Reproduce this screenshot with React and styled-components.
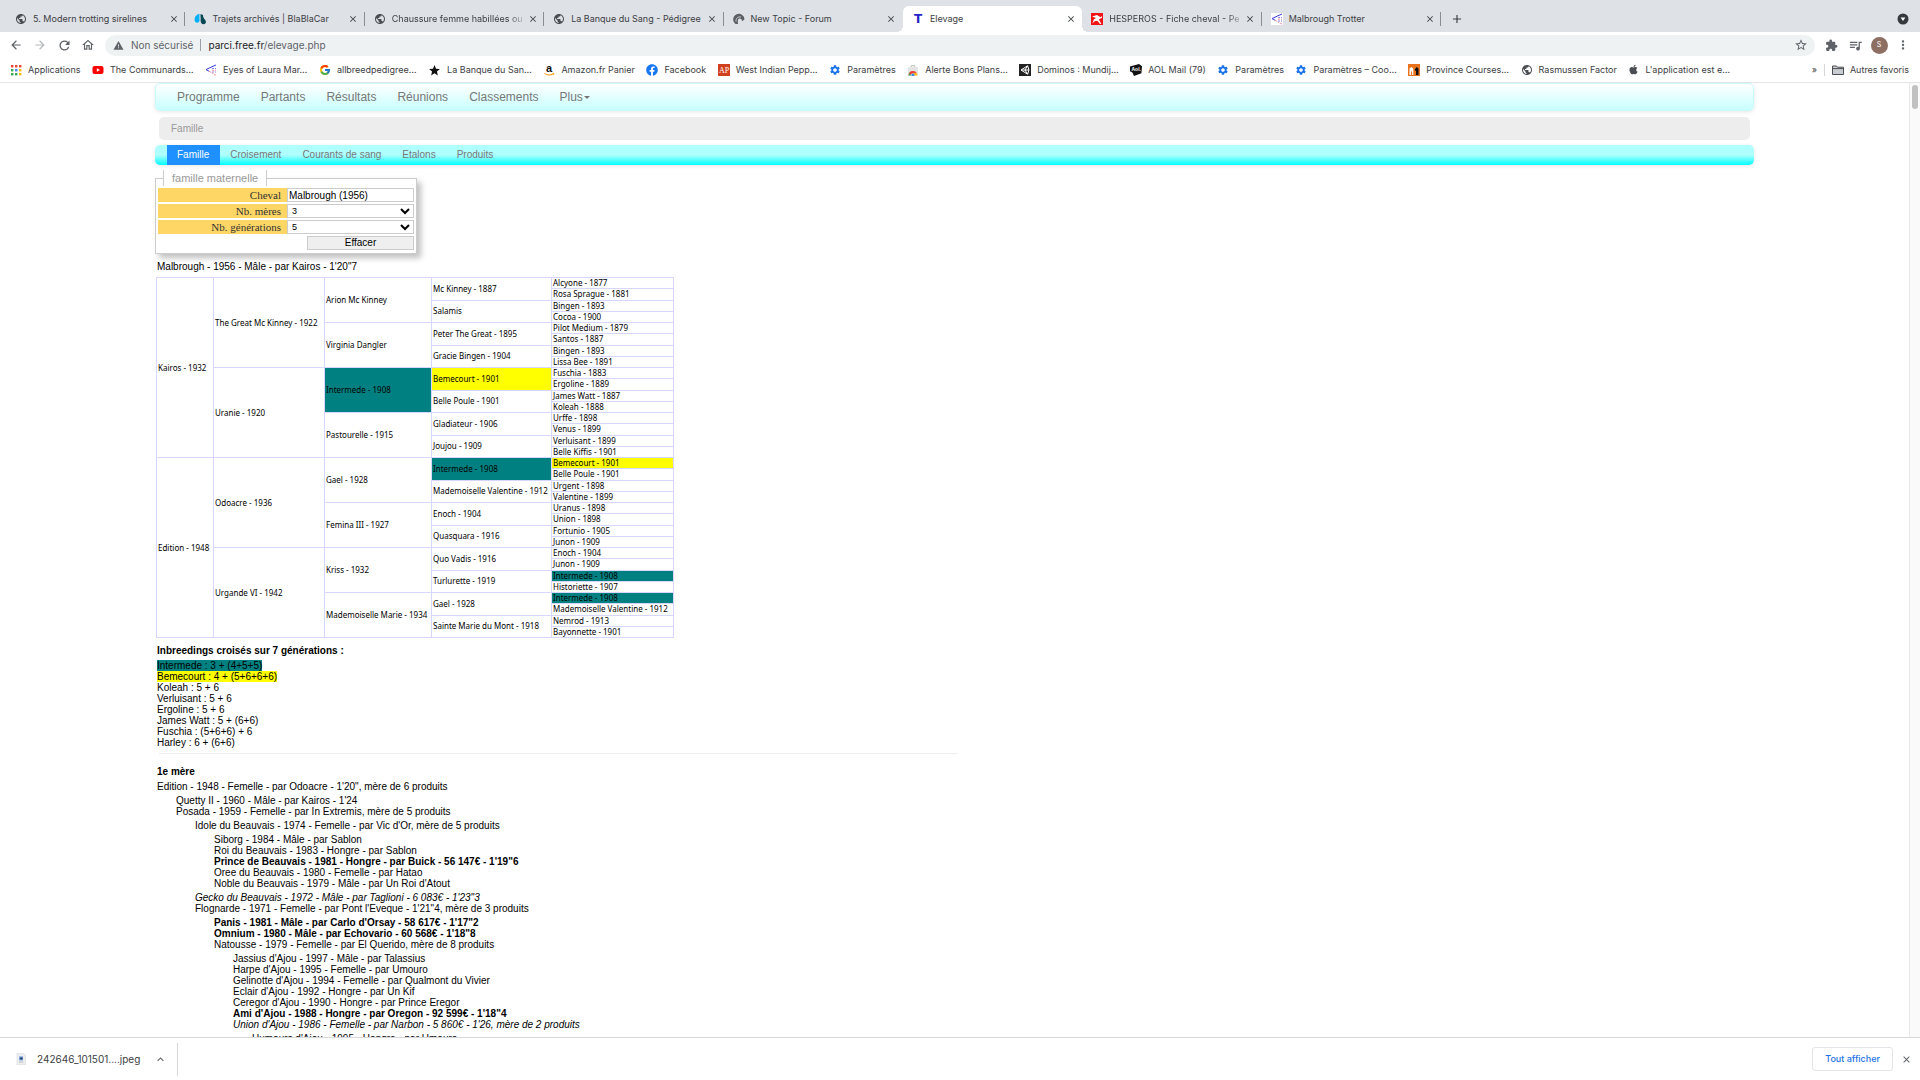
import React from "react";
import styled, { createGlobalStyle, css } from "styled-components";
import {
  MdPublic, MdClose, MdAdd, MdArrowBack, MdArrowForward, MdRefresh, MdOutlineHome,
  MdWarning, MdStarBorder, MdExtension, MdQueueMusic, MdMoreVert, MdSettings, MdStar,
  MdExpandLess,
} from "react-icons/md";
import { FaFacebook, FaApple } from "react-icons/fa";
import { FcGoogle } from "react-icons/fc";

const ui = `Inter, Roboto, "Liberation Sans", sans-serif`;
const arial = `"Liberation Sans", Arial, sans-serif`;

const GlobalStyle = createGlobalStyle`
  *, *::before, *::after { box-sizing: border-box; }
  body { margin: 0; background: #fff; color: #000; font-family: ${arial}; }
  a { color: inherit; text-decoration: none; }
  ul { list-style: none; margin: 0; padding: 0; }
  button { font: inherit; color: inherit; border: 0; padding: 0; background: none; }
  svg { display: block; flex: none; }
`;

const Browser = styled.div`
  display: flex;
  flex-direction: column;
  height: 100vh;
  overflow: hidden;
`;

/* Browser chrome */

const TabStrip = styled.div`
  display: flex;
  align-items: center;
  flex: none;
  height: 32px;
  padding: 6px 11px 0 6px;
  background: #dee1e6;
  color: #3c4043;
  font: 9px/12px ${ui};
`;

const Tabs = styled.ul`
  display: flex;
  flex: 0 1 1435px;
  min-width: 0;
  height: 26px;
`;

const Tab = styled.li`
  position: relative;
  display: flex;
  flex: 1 1 0;
  align-items: center;
  min-width: 0;
  padding: 0 7px 0 9px;
  ${(p) =>
    p.$active &&
    css`
      background: #fff;
      border-radius: 6px 6px 0 0;
      &::before,
      &::after {
        content: "";
        position: absolute;
        bottom: 0;
        width: 6px;
        height: 6px;
      }
      &::before {
        left: -6px;
        background: radial-gradient(circle at 0 0, transparent 6px, #fff 6px);
      }
      &::after {
        right: -6px;
        background: radial-gradient(circle at 100% 0, transparent 6px, #fff 6px);
      }
    `}
  ${(p) =>
    p.$divider &&
    css`
      &::after {
        content: "";
        position: absolute;
        right: 0;
        top: 6px;
        width: 1px;
        height: 14px;
        background: #8a8d91;
      }
    `}
`;

const TabTitle = styled.span`
  flex: 1;
  margin: 0 1px 0 6px;
  white-space: nowrap;
  ${(p) => p.$fade && css`mask-image: linear-gradient(to right, #000 calc(100% - 18px), transparent);`}
`;

const IconButton = styled.button`
  display: flex;
  flex: none;
  align-items: center;
  justify-content: center;
  width: ${(p) => p.$w || 24}px;
  color: ${(p) => p.$color || "#5f6368"};
`;

const Spacer = styled.span`
  flex: 1;
`;

const Toolbar = styled.div`
  display: flex;
  align-items: center;
  flex: none;
  height: 26px;
  padding: 0 5px 0 4px;
`;

const AddressBar = styled.div`
  display: flex;
  flex: 1;
  align-items: center;
  height: 21px;
  margin: 0 4px 0 5px;
  padding: 0 2px 0 8px;
  border-radius: 11px;
  background: #eef2f3;
  color: #5f6368;
  font: 10px/14px ${ui};
`;

const SecurityLabel = styled.span`
  margin-left: 7px;
`;

const Rule = styled.span`
  flex: none;
  width: 1px;
  height: 12px;
  margin: 0 7px;
  background: ${(p) => p.$color || "#9aa0a6"};
`;

const Url = styled.span`
  flex: 1;
  b { font-weight: 400; color: #202124; }
`;

const Avatar = styled.span`
  display: flex;
  align-items: center;
  justify-content: center;
  width: 17px;
  height: 17px;
  border-radius: 50%;
  background: #8d6e63;
  color: #fff;
  font: 7px/8px ${ui};
`;

const BookmarksBar = styled.nav`
  display: flex;
  align-items: center;
  flex: none;
  height: 25px;
  padding: 0 11px 0 10px;
  border-bottom: 1px solid #e3e5e7;
  color: #3c4043;
  font: 9px/12px ${ui};
`;

const Bookmarks = styled.ul`
  display: flex;
  flex: 0 1 1720px;
  justify-content: space-between;
  min-width: 0;
`;

const Bookmark = styled.a`
  display: flex;
  align-items: center;
  gap: 6px;
  white-space: nowrap;
`;

/* Page */

const Viewport = styled.div`
  display: flex;
  flex: 1;
  min-height: 0;
  overflow: hidden;
`;

const Page = styled.main`
  flex: 1;
  min-width: 0;
  padding: 0 155px;
`;

const ScrollTrack = styled.div`
  flex: none;
  width: 11px;
  padding: 2px;
  border-left: 1px solid #e8e8e8;
  background: #fafafa;
`;

const ScrollThumb = styled.div`
  width: 6px;
  height: 24px;
  border-radius: 3px;
  background: #c1c1c1;
`;

const MainNav = styled.nav`
  display: flex;
  align-items: center;
  gap: 21px;
  height: 28px;
  padding: 0 21px;
  border: 1px solid #c9fbfb;
  border-radius: 5px;
  background: linear-gradient(#fff, #c8ffff);
  box-shadow: 0 1px 4px rgba(0, 0, 0, 0.1);
  color: #777;
  font-size: 12px;
  line-height: 14px;
`;

const Caret = styled.span`
  display: inline-block;
  margin-left: 1px;
  border: 3px solid transparent;
  border-top-color: #777;
  border-bottom: 0;
  vertical-align: 2px;
`;

const Breadcrumb = styled.div`
  margin: 6px 4px 5px;
  padding: 6px 12px;
  border-radius: 5px;
  background: #ededed;
  color: #999;
  font-size: 10px;
  line-height: 11px;
`;

const SubNav = styled.nav`
  display: flex;
  height: 20px;
  padding-left: 12px;
  border-radius: 5px;
  background: linear-gradient(#afffff 50%, #00ffff);
  box-shadow: 0 1px 4px rgba(0, 0, 0, 0.1);
  font-size: 10px;
  line-height: 20px;
`;

const SubLink = styled.a`
  padding: 0 11px 0 10px;
  color: ${(p) => (p.$active ? "#fff" : "#777")};
  background: ${(p) => (p.$active ? "#1e90ff" : "none")};
`;

const SearchForm = styled.fieldset`
  width: 262px;
  margin: 5px 0 7px;
  padding: 2px 1px 3px;
  border: 1px solid #ccc;
  box-shadow: 4px 4px 6px rgba(0, 0, 0, 0.25);
  font-size: 10px;
`;

const Legend = styled.legend`
  margin-left: 6px;
  padding: 0 8px;
  border: solid #ccc;
  border-width: 0 1px;
  background: #fff;
  color: #999;
  font-size: 11px;
  line-height: 16px;
`;

const Fields = styled.div`
  display: grid;
  grid-template-columns: 129px 1fr;
  grid-auto-rows: 14px;
  row-gap: 2px;
  padding: 0 1px;
`;

const FieldLabel = styled.label`
  padding-right: 6px;
  background: #fed665;
  color: #333;
  font: 11px/15px "Liberation Serif", "Times New Roman", serif;
  text-align: right;
`;

const fieldStyle = css`
  width: 100%;
  min-width: 0;
  height: 14px;
  margin: 0;
  border: 1px solid #ccc;
  border-radius: 0;
  background: #fff;
  color: #000;
`;

const TextField = styled.input`
  ${fieldStyle}
  padding: 0 1px;
  font: 10px/12px ${arial};
`;

const SelectField = styled.select`
  ${fieldStyle}
  padding: 0;
  font: 9px/12px ${arial};
`;

const ClearButton = styled.button`
  grid-column: 2;
  justify-self: end;
  width: 107px;
  border: 1px solid #ccc;
  background: #efefef;
  color: #000;
  line-height: 12px;
`;

const Content = styled.section`
  padding-left: 2px;
  font-size: 10px;
  line-height: 11px;
  white-space: nowrap;
`;

const Summary = styled.p`
  margin: 0 0 5px;
`;

const Pedigree = styled.table`
  width: 517px;
  height: 361px;
  margin-left: -1px;
  border-collapse: collapse;
  table-layout: fixed;
  font: 8px/8px "Noto Sans", "DejaVu Sans", sans-serif;
`;

const highlights = { teal: "#008080", yellow: "#ffff00" };

const Ancestor = styled.td`
  padding: 0 1px;
  border: 1px solid #d6d6ff;
  background: ${(p) => highlights[p.$mark] || "none"};
`;

const Heading = styled.h2`
  margin: ${(p) => p.$top}px 0 4px;
  font-size: 10px;
  line-height: 11px;
`;

const Mark = styled.span`
  display: inline-block;
  background: ${(p) => highlights[p.$mark] || "none"};
`;

const Divider = styled.hr`
  width: 50%;
  height: 1px;
  margin: 5px 0 0 2px;
  border: 0;
  background: #eee;
`;

const Progeny = styled.ul`
  padding-left: 19px;
  margin: 3px 0;
`;

const Horse = styled.span`
  font-weight: ${(p) => (p.$kind === "bold" ? 700 : 400)};
  font-style: ${(p) => (p.$kind === "italic" ? "italic" : "normal")};
`;

/* Download shelf */

const Shelf = styled.footer`
  display: flex;
  align-items: center;
  flex: none;
  height: 43px;
  padding: 0 6px 0 15px;
  border-top: 1px solid #d5d7da;
  background: #fff;
  color: #3c4043;
  font: 10px/14px ${ui};
`;

const Download = styled.div`
  display: flex;
  align-items: center;
  gap: 10px;
  height: 33px;
  padding-right: 7px;
  border-right: 1px solid #d5d7da;
`;

const ShowAll = styled.button`
  height: 24px;
  margin-right: 5px;
  padding: 0 12px;
  border: 1px solid #e3e5e8;
  border-radius: 3px;
  color: #1a73e8;
  font: 500 9px/12px ${ui};
`;

/* Icons */

const Svg = ({ children, s = 12 }) => (
  <svg width={s} height={s} viewBox="0 0 12 12">{children}</svg>
);

const Globe = () => <MdPublic size={12} color="#4a4d51" />;
const Gear = () => <MdSettings size={12} color="#1a73e8" />;
const Grid = () => (
  <Svg>
    {[0, 1, 2].map((r) =>
      [0, 1, 2].map((c) => (
        <rect key={`${r}${c}`} x={1 + c * 4} y={1 + r * 4} width="2.4" height="2.4"
          fill={[["#ea4335", "#ea4335", "#ea4335"], ["#34a853", "#4285f4", "#fbbc04"], ["#34a853", "#34a853", "#fbbc04"]][r][c]} />
      ))
    )}
  </Svg>
);
const YouTube = () => (
  <Svg><rect x=".5" y="2" width="11" height="8" rx="2" fill="#f00" /><path d="M4.8 4.2v3.6L8 6z" fill="#fff" /></Svg>
);
const Lines = ({ box }) => (
  <Svg>
    {box && <rect width="12" height="12" fill="#fff" />}
    <g fill="none" strokeWidth="1">
      <path d="M11 1 6 3.2M6 3.2 1 5.6l3 1.6" stroke="#3a3ae0" />
      <path d="m4 7.2 7 4M7 6.2h4" stroke="#f08a9a" strokeDasharray="2 1" />
      <path d="M7 4.5h4M7 8h4" stroke="#8a8af0" strokeDasharray="2 1" />
    </g>
  </Svg>
);
const Amazon = () => (
  <Svg>
    <text x="6" y="8.4" textAnchor="middle" fontFamily="Liberation Sans, sans-serif" fontWeight="700" fontSize="11" fill="#111">a</text>
    <path d="M1.5 9.4c2.8 2 6.2 2 8.8.2M10.6 9v1.8" fill="none" stroke="#f90" strokeWidth="1.1" />
  </Svg>
);
const Ap = () => (
  <Svg>
    <rect width="12" height="12" fill="#d0401c" />
    <text x="6" y="8.7" textAnchor="middle" fontFamily="Liberation Serif, serif" fontSize="8" fill="#fff">AP</text>
  </Svg>
);
const Store = () => (
  <Svg>
    <path d="M4.3 3V1.6h3.4V3" fill="none" stroke="#bbb" />
    <path d="M1 3h10v8.5H1z" fill="#e4e4e4" />
    <path d="M1.6 11.5a4.4 4.4 0 0 1 8.3-2.2H6z" fill="#ea4335" />
    <path d="M1.6 11.5a4.4 4.4 0 0 1 .7-2.6l2.2 2.6z" fill="#34a853" />
    <path d="M6 9.3h3.9a4.4 4.4 0 0 1 .5 2.2H7z" fill="#fbbc04" />
    <circle cx="6" cy="11" r="1.5" fill="#4285f4" />
  </Svg>
);
const Unity = () => (
  <Svg>
    <rect width="12" height="12" fill="#222" />
    <path d="M6 6 8.6 1.8 10 6 8.6 10.2zM6 6h4M6 6 2 6l6.6-4.2M2 6l6.6 4.2" fill="none" stroke="#fff" strokeWidth="1" />
  </Svg>
);
const Aol = () => (
  <Svg>
    <path d="M0 2.6 9 0l3 2.2-.6 7L4 12 2.4 8.4 0 7.2z" fill="#111" />
    <text x="6.2" y="7.4" textAnchor="middle" fontFamily="Liberation Sans, sans-serif" fontWeight="700" fontSize="5" fill="#fff">Aol.</text>
  </Svg>
);
const Province = () => (
  <Svg>
    <rect width="12" height="12" fill="#e8731c" />
    <path d="M1.5 11V4.5L3.5 3l1.8 1.8V11H4V7L3 8v3z" fill="#fff" />
    <path d="M6.5 6 8.5 3l2 1.5V11H8V7z" fill="#111" />
  </Svg>
);
const Folder = () => (
  <Svg><path d="M.5 2h4l1 1.2h6V10.5H.5z" fill="#c9ccd0" stroke="#4a4d51" /><path d="M.5 4.6h11" stroke="#4a4d51" /></Svg>
);
const Quotes = () => (
  <Svg>
    <path d="M5.4.8C2.6 1.4.6 3.5.6 6.4c0 2 1 3.3 2.6 3.3s2.3-1 2.3-2.5z" fill="#00aff5" />
    <path d="M6.6 1c-.4 3 .5 4 0 6.5 0 2.4 1.2 3.7 3 3.7 1.5 0 2.3-1 2.3-2.4C11.9 6.4 8.9 6 9 2z" fill="#054752" />
  </Svg>
);
const HorseHead = () => (
  <Svg>
    <path d="M2.6 11A5.6 5.6 0 1 1 11.4 6.6L9 8.2C9 6.4 8 5.4 6.4 5.6 4.8 6 4.6 8 5 11z" fill="#5c5f63" />
    <path d="M3 8.6C2.8 5 5 3.4 8 4" fill="none" stroke="#dee1e6" strokeWidth=".8" />
  </Svg>
);
const LetterT = () => (
  <Svg><text x="6" y="10.4" textAnchor="middle" fontFamily="DejaVu Sans, sans-serif" fontWeight="700" fontSize="12" fill="#2424c8">T</text></Svg>
);
const Hesperos = () => (
  <Svg>
    <rect width="12" height="12" fill="#f01414" />
    <path d="M1 3.6 6 2l3.6 2.2L11 3v1.8L7.8 6.4 10.4 11H9L6.4 7.8 3.6 8.2 1.4 10.6l1.4-4L5 5z" fill="#fff" />
  </Svg>
);
const TabSearch = () => (
  <Svg><circle cx="6" cy="6" r="5.5" fill="#35383c" /><path d="M3.6 4.6h4.8L6 8z" fill="#fff" /></Svg>
);
const FileIcon = () => (
  <Svg><path d="M2 0h6l2.5 2.5V12H2z" fill="#eceef0" stroke="#d0d3d6" strokeWidth=".5" /><path d="M4 3.4h4v4H4z" fill="#7aa2dc" /><circle cx="6.4" cy="5.4" r="1.2" fill="#28406e" /><path d="M4 9h4.4" stroke="#bbb" /></Svg>
);

/* Data */

const tabs = [
  { title: "5. Modern trotting sirelines", Icon: Globe, divider: true },
  { title: "Trajets archivés | BlaBlaCar", Icon: Quotes, divider: true },
  { title: "Chaussure femme habillées ou", Icon: Globe, divider: true, fade: true },
  { title: "La Banque du Sang - Pédigree", Icon: Globe, divider: true },
  { title: "New Topic - Forum", Icon: HorseHead },
  { title: "Elevage", Icon: LetterT, active: true },
  { title: "HESPEROS - Fiche cheval - Pe", Icon: Hesperos, divider: true, fade: true },
  { title: "Malbrough Trotter", Icon: () => <Lines box />, divider: true },
];

const bookmarks = [
  ["Applications", Grid],
  ["The Communards…", YouTube],
  ["Eyes of Laura Mar…", Lines],
  ["allbreedpedigree…", () => <FcGoogle size={12} />],
  ["La Banque du San…", () => <MdStar size={13} color="#111" />],
  ["Amazon.fr Panier", Amazon],
  ["Facebook", () => <FaFacebook size={12} color="#1877f2" />],
  ["West Indian Pepp…", Ap],
  ["Paramètres", Gear],
  ["Alerte Bons Plans…", Store],
  ["Dominos : Mundij…", Unity],
  ["AOL Mail (79)", Aol],
  ["Paramètres", Gear],
  ["Paramètres – Coo…", Gear],
  ["Province Courses…", Province],
  ["Rasmussen Factor", Globe],
  ["L'application est e…", () => <FaApple size={11} color="#4a4d51" />],
];

const generations = [
  ["Kairos - 1932", "Edition - 1948"],
  ["The Great Mc Kinney - 1922", "Uranie - 1920", "Odoacre - 1936", "Urgande VI - 1942"],
  ["Arion Mc Kinney", "Virginia Dangler", "Intermede - 1908", "Pastourelle - 1915", "Gael - 1928", "Femina III - 1927", "Kriss - 1932", "Mademoiselle Marie - 1934"],
  ["Mc Kinney - 1887", "Salamis", "Peter The Great - 1895", "Gracie Bingen - 1904", "Bemecourt - 1901", "Belle Poule - 1901", "Gladiateur - 1906", "Joujou - 1909", "Intermede - 1908", "Mademoiselle Valentine - 1912", "Enoch - 1904", "Quasquara - 1916", "Quo Vadis - 1916", "Turlurette - 1919", "Gael - 1928", "Sainte Marie du Mont - 1918"],
  ["Alcyone - 1877", "Rosa Sprague - 1881", "Bingen - 1893", "Cocoa - 1900", "Pilot Medium - 1879", "Santos - 1887", "Bingen - 1893", "Lissa Bee - 1891", "Fuschia - 1883", "Ergoline - 1889", "James Watt - 1887", "Koleah - 1888", "Urffe - 1898", "Venus - 1899", "Verluisant - 1899", "Belle Kiffis - 1901", "Bemecourt - 1901", "Belle Poule - 1901", "Urgent - 1898", "Valentine - 1899", "Uranus - 1898", "Union - 1898", "Fortunio - 1905", "Junon - 1909", "Enoch - 1904", "Junon - 1909", "Intermede - 1908", "Historiette - 1907", "Intermede - 1908", "Mademoiselle Valentine - 1912", "Nemrod - 1913", "Bayonnette - 1901"],
];

const markOf = (name) =>
  name.startsWith("Intermede") ? "teal" : name.startsWith("Bemecourt") ? "yellow" : undefined;

const inbreedings = [
  "Intermede : 3 + (4+5+5)",
  "Bemecourt : 4 + (5+6+6+6)",
  "Koleah : 5 + 6",
  "Verluisant : 5 + 6",
  "Ergoline : 5 + 6",
  "James Watt : 5 + (6+6)",
  "Fuschia : (5+6+6) + 6",
  "Harley : 6 + (6+6)",
];

const family = [
  { t: "Quetty II - 1960 - Mâle - par Kairos - 1'24" },
  {
    t: "Posada - 1959 - Femelle - par In Extremis, mère de 5 produits",
    c: [
      {
        t: "Idole du Beauvais - 1974 - Femelle - par Vic d'Or, mère de 5 produits",
        c: [
          { t: "Siborg - 1984 - Mâle - par Sablon" },
          { t: "Roi du Beauvais - 1983 - Hongre - par Sablon" },
          { t: "Prince de Beauvais - 1981 - Hongre - par Buick - 56 147€ - 1'19\"6", k: "bold" },
          { t: "Oree du Beauvais - 1980 - Femelle - par Hatao" },
          { t: "Noble du Beauvais - 1979 - Mâle - par Un Roi d'Atout" },
        ],
      },
      { t: "Gecko du Beauvais - 1972 - Mâle - par Taglioni - 6 083€ - 1'23\"3", k: "italic" },
      {
        t: "Flognarde - 1971 - Femelle - par Pont l'Eveque - 1'21\"4, mère de 3 produits",
        c: [
          { t: "Panis - 1981 - Mâle - par Carlo d'Orsay - 58 617€ - 1'17\"2", k: "bold" },
          { t: "Omnium - 1980 - Mâle - par Echovario - 60 568€ - 1'18\"8", k: "bold" },
          {
            t: "Natousse - 1979 - Femelle - par El Querido, mère de 8 produits",
            c: [
              { t: "Jassius d'Ajou - 1997 - Mâle - par Talassius" },
              { t: "Harpe d'Ajou - 1995 - Femelle - par Umouro" },
              { t: "Gelinotte d'Ajou - 1994 - Femelle - par Qualmont du Vivier" },
              { t: "Eclair d'Ajou - 1992 - Hongre - par Un Kif" },
              { t: "Ceregor d'Ajou - 1990 - Hongre - par Prince Eregor" },
              { t: "Ami d'Ajou - 1988 - Hongre - par Oregon - 92 599€ - 1'18\"4", k: "bold" },
              {
                t: "Union d'Ajou - 1986 - Femelle - par Narbon - 5 860€ - 1'26, mère de 2 produits",
                k: "italic",
                c: [{ t: "Humours d'Ajou - 1995 - Hongre - par Umouro" }],
              },
            ],
          },
        ],
      },
    ],
  },
];

function FamilyTree({ nodes }) {
  return (
    <Progeny>
      {nodes.map((n) => (
        <li key={n.t}>
          <Horse $kind={n.k}>{n.t}</Horse>
          {n.c && <FamilyTree nodes={n.c} />}
        </li>
      ))}
    </Progeny>
  );
}

function PedigreeTable() {
  return (
    <Pedigree>
      <colgroup>
        {[57, 111, 107, 120, 122].map((w, i) => <col key={i} width={w} />)}
      </colgroup>
      <tbody>
        {generations[4].map((_, row) => (
          <tr key={row}>
            {generations.map((names, g) => {
              const span = 32 / names.length;
              if (row % span) return null;
              const name = names[row / span];
              return <Ancestor key={g} rowSpan={span} $mark={markOf(name)}>{name}</Ancestor>;
            })}
          </tr>
        ))}
      </tbody>
    </Pedigree>
  );
}

export default function App() {
  return (
    <Browser>
      <GlobalStyle />
      <TabStrip>
        <Tabs>
          {tabs.map(({ title, Icon, divider, active, fade }) => (
            <Tab key={title} $divider={divider} $active={active}>
              <Icon />
              <TabTitle $fade={fade}>{title}</TabTitle>
              <IconButton $w={9} $color="#3c4043" aria-label="Fermer l'onglet"><MdClose size={10} /></IconButton>
            </Tab>
          ))}
        </Tabs>
        <IconButton $w={32} $color="#3c4043" aria-label="Nouvel onglet"><MdAdd size={14} /></IconButton>
        <Spacer />
        <IconButton $w={12} aria-label="Rechercher"><TabSearch /></IconButton>
      </TabStrip>
      <Toolbar>
        <IconButton aria-label="Retour"><MdArrowBack size={14} /></IconButton>
        <IconButton $color="#b6b9bd" aria-label="Avancer"><MdArrowForward size={14} /></IconButton>
        <IconButton aria-label="Actualiser"><MdRefresh size={15} /></IconButton>
        <IconButton aria-label="Accueil"><MdOutlineHome size={14} /></IconButton>
        <AddressBar>
          <MdWarning size={11} />
          <SecurityLabel>Non sécurisé</SecurityLabel>
          <Rule />
          <Url><b>parci.free.fr</b>/elevage.php</Url>
          <IconButton aria-label="Favori"><MdStarBorder size={14} /></IconButton>
        </AddressBar>
        <IconButton aria-label="Extensions"><MdExtension size={13} /></IconButton>
        <IconButton aria-label="Musique"><MdQueueMusic size={15} /></IconButton>
        <IconButton aria-label="Profil"><Avatar>S</Avatar></IconButton>
        <IconButton aria-label="Menu"><MdMoreVert size={14} /></IconButton>
      </Toolbar>
      <BookmarksBar>
        <Bookmarks>
          {bookmarks.map(([label, Icon], i) => (
            <li key={i}><Bookmark href="#"><Icon />{label}</Bookmark></li>
          ))}
        </Bookmarks>
        <Spacer />
        <span>»</span>
        <Rule $color="#d5d7da" />
        <Bookmark href="#"><Folder />Autres favoris</Bookmark>
      </BookmarksBar>

      <Viewport>
        <Page>
          <MainNav>
            {["Programme", "Partants", "Résultats", "Réunions", "Classements"].map((n) => (
              <a key={n} href="#">{n}</a>
            ))}
            <a href="#">Plus<Caret /></a>
          </MainNav>
          <Breadcrumb>Famille</Breadcrumb>
          <SubNav>
            {["Famille", "Croisement", "Courants de sang", "Etalons", "Produits"].map((n, i) => (
              <SubLink key={n} href="#" $active={i === 0}>{n}</SubLink>
            ))}
          </SubNav>
          <form>
            <SearchForm>
              <Legend>famille maternelle</Legend>
              <Fields>
                <FieldLabel htmlFor="cheval">Cheval</FieldLabel>
                <TextField id="cheval" defaultValue="Malbrough (1956)" />
                <FieldLabel htmlFor="meres">Nb. mères</FieldLabel>
                <SelectField id="meres"><option>3</option></SelectField>
                <FieldLabel htmlFor="generations">Nb. générations</FieldLabel>
                <SelectField id="generations"><option>5</option></SelectField>
                <ClearButton type="reset">Effacer</ClearButton>
              </Fields>
            </SearchForm>
          </form>
          <Content>
            <Summary>Malbrough - 1956 - Mâle - par Kairos - 1'20"7</Summary>
            <PedigreeTable />
            <Heading $top={7}>Inbreedings croisés sur 7 générations :</Heading>
            <ul>
              {inbreedings.map((t) => <li key={t}><Mark $mark={markOf(t)}>{t}</Mark></li>)}
            </ul>
            <Divider />
            <Heading $top={12}>1e mère</Heading>
            <Horse>Edition - 1948 - Femelle - par Odoacre - 1'20", mère de 6 produits</Horse>
            <FamilyTree nodes={family} />
          </Content>
        </Page>
        <ScrollTrack><ScrollThumb /></ScrollTrack>
      </Viewport>

      <Shelf>
        <Download>
          <FileIcon />
          <span>242646_101501....jpeg</span>
          <IconButton $w={20} aria-label="Options"><MdExpandLess size={13} /></IconButton>
        </Download>
        <Spacer />
        <ShowAll>Tout afficher</ShowAll>
        <IconButton $w={16} aria-label="Fermer"><MdClose size={11} /></IconButton>
      </Shelf>
    </Browser>
  );
}
